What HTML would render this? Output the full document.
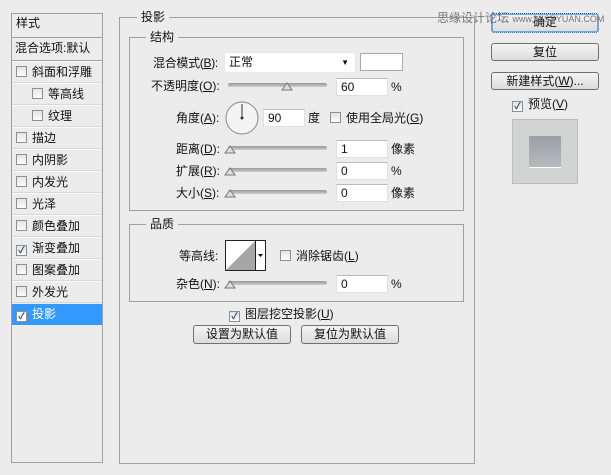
<!DOCTYPE html>
<html><head><meta charset="utf-8"><style>
*{margin:0;padding:0;box-sizing:border-box}
body{width:611px;height:475px;background:#ececec;font-family:"Liberation Sans","Noto Sans CJK SC",sans-serif;font-size:12px;color:#111;position:relative;overflow:hidden}
.a{position:absolute;white-space:nowrap;line-height:14px}
.box{position:absolute;border:1px solid #a0a0a0}
.lg{position:absolute;background:#ececec;padding:0 4px;line-height:14px}
.row{position:absolute;left:12px;width:90px;height:22px;border-top:1px solid #fafafa;border-bottom:1px solid #d8d8d8;line-height:20px;padding-left:4px}
.cb{display:inline-block;width:11px;height:11px;border:1px solid #8e8f8f;background:linear-gradient(#e4e4e4,#fdfdfd);vertical-align:-1px;margin-right:5px;position:relative;font-size:9px;line-height:9px;color:#1f3f8f;text-align:center;font-weight:bold}
.inp{position:absolute;background:#fff;border:1px solid #e0e0e0;border-top-color:#bbb;height:18px;line-height:16px;padding-left:4px}
.sl{position:absolute;height:4px;border-radius:2px;background:linear-gradient(#999,#ccc);}
.btn{position:absolute;border:1px solid #707070;border-radius:3px;background:linear-gradient(#f4f4f4,#dcdcdc);text-align:center;line-height:16px;font-size:12px}
</style></head><body>
<div class="box" style="left:11px;top:13px;width:92px;height:450px;background:#ececec"></div>
<div class="a" style="left:16px;top:16px">样式</div>
<div style="position:absolute;left:12px;top:37px;width:90px;height:1px;background:#a0a0a0"></div>
<div class="a" style="left:15px;top:41px">混合选项:默认</div>
<div style="position:absolute;left:12px;top:60px;width:90px;height:1px;background:#a0a0a0"></div>
<div class="row" style="top:61px"><span class="cb"></span>斜面和浮雕</div>
<div class="row" style="top:83px;padding-left:20px"><span class="cb"></span>等高线</div>
<div class="row" style="top:105px;padding-left:20px"><span class="cb"></span>纹理</div>
<div class="row" style="top:127px"><span class="cb"></span>描边</div>
<div class="row" style="top:149px"><span class="cb"></span>内阴影</div>
<div class="row" style="top:171px"><span class="cb"></span>内发光</div>
<div class="row" style="top:193px"><span class="cb"></span>光泽</div>
<div class="row" style="top:215px"><span class="cb"></span>颜色叠加</div>
<div class="row" style="top:237px"><span class="cb">✓</span>渐变叠加</div>
<div class="row" style="top:259px"><span class="cb"></span>图案叠加</div>
<div class="row" style="top:281px"><span class="cb"></span>外发光</div>
<div class="row" style="top:304px;background:#3399ff;color:#fff;border:none;height:21px"><span class="cb" style="background:#fff">✓</span>投影</div>

<div class="box" style="left:119px;top:17px;width:356px;height:447px"></div>
<div class="lg" style="left:137px;top:10px">投影</div>
<div class="box" style="left:129px;top:37px;width:335px;height:174px"></div>
<div class="lg" style="left:146px;top:30px">结构</div>

<div class="a" style="left:153px;top:56px;letter-spacing:-0.3px">混合模式(<u>B</u>):</div>
<div class="inp" style="left:224px;top:52px;width:132px;height:21px;line-height:19px;border-color:#e8e8e8">正常<span style="position:absolute;right:6px;top:0;font-size:8px">▼</span></div>
<div class="inp" style="left:360px;top:53px;width:43px;height:18px;border-color:#aaa"></div>

<div class="a" style="left:151px;top:79px">不透明度(<u>O</u>):</div>
<div class="sl" style="left:228px;top:83px;width:99px"></div>
<svg class="a" style="left:281px;top:82px" width="12" height="9"><path d="M1 8 L6 1 L11 8 Z" fill="#ddd" stroke="#777"/></svg>
<div class="inp" style="left:336px;top:78px;width:52px">60</div>
<div class="a" style="left:391px;top:80px">%</div>

<div class="a" style="left:176px;top:111px">角度(<u>A</u>):</div>
<svg class="a" style="left:225px;top:101px" width="35" height="35"><circle cx="17" cy="17" r="16" fill="#f4f4f4" stroke="#888"/><line x1="17" y1="3" x2="17" y2="17" stroke="#333"/><circle cx="17" cy="17" r="1.5" fill="#333"/></svg>
<div class="inp" style="left:263px;top:109px;width:42px">90</div>
<div class="a" style="left:308px;top:111px">度</div>
<div class="a" style="left:330px;top:111px"><span class="cb"></span>使用全局光(<u>G</u>)</div>

<div class="a" style="left:176px;top:142px">距离(<u>D</u>):</div>
<div class="sl" style="left:228px;top:146px;width:99px"></div>
<svg class="a" style="left:224px;top:145px" width="12" height="9"><path d="M1 8 L6 1 L11 8 Z" fill="#ddd" stroke="#777"/></svg>
<div class="inp" style="left:336px;top:140px;width:52px">1</div>
<div class="a" style="left:391px;top:142px">像素</div>

<div class="a" style="left:176px;top:164px">扩展(<u>R</u>):</div>
<div class="sl" style="left:228px;top:168px;width:99px"></div>
<svg class="a" style="left:224px;top:167px" width="12" height="9"><path d="M1 8 L6 1 L11 8 Z" fill="#ddd" stroke="#777"/></svg>
<div class="inp" style="left:336px;top:162px;width:52px">0</div>
<div class="a" style="left:391px;top:164px">%</div>

<div class="a" style="left:176px;top:186px">大小(<u>S</u>):</div>
<div class="sl" style="left:228px;top:190px;width:99px"></div>
<svg class="a" style="left:224px;top:189px" width="12" height="9"><path d="M1 8 L6 1 L11 8 Z" fill="#ddd" stroke="#777"/></svg>
<div class="inp" style="left:336px;top:184px;width:52px">0</div>
<div class="a" style="left:391px;top:186px">像素</div>

<div class="box" style="left:129px;top:224px;width:335px;height:78px"></div>
<div class="lg" style="left:146px;top:217px">品质</div>
<div class="a" style="left:179px;top:249px">等高线:</div>
<svg class="a" style="left:225px;top:240px" width="41" height="31"><rect x="0.5" y="0.5" width="40" height="30" fill="#fff" stroke="#222"/><path d="M1 30 L30 1 L30 30 Z" fill="#a6a6a6"/><line x1="30.5" y1="1" x2="30.5" y2="30" stroke="#222"/><path d="M33 14 L38 14 L35.5 17 Z" fill="#000"/></svg>
<div class="a" style="left:280px;top:249px"><span class="cb"></span>消除锯齿(<u>L</u>)</div>
<div class="a" style="left:176px;top:277px">杂色(<u>N</u>):</div>
<div class="sl" style="left:228px;top:281px;width:99px"></div>
<svg class="a" style="left:224px;top:280px" width="12" height="9"><path d="M1 8 L6 1 L11 8 Z" fill="#ddd" stroke="#777"/></svg>
<div class="inp" style="left:336px;top:275px;width:52px">0</div>
<div class="a" style="left:391px;top:277px">%</div>

<div class="a" style="left:229px;top:307px"><span class="cb">✓</span>图层挖空投影(<u>U</u>)</div>
<div class="btn" style="left:193px;top:325px;width:98px;height:19px">设置为默认值</div>
<div class="btn" style="left:301px;top:325px;width:98px;height:19px">复位为默认值</div>

<div class="btn" style="left:491px;top:13px;width:108px;height:20px;border:1px dotted #1b5aa8;box-shadow:inset 0 0 0 1px #6aa8e0">确定</div>
<div class="btn" style="left:491px;top:43px;width:108px;height:18px">复位</div>
<div class="btn" style="left:491px;top:72px;width:108px;height:18px">新建样式(<u>W</u>)...</div>
<div class="a" style="left:512px;top:97px"><span class="cb">✓</span>预览(<u>V</u>)</div>
<div style="position:absolute;left:512px;top:119px;width:66px;height:65px;background:#d2d3d3;border:1px solid #bbb"></div>
<div style="position:absolute;left:529px;top:136px;width:32px;height:32px;background:linear-gradient(#9aa0a5,#b6babd);border-bottom:1px solid #fff"></div>
<div class="a" style="left:437px;top:11px;font-size:12px;color:#777">思缘设计论坛 <span style="font-size:9px">www.MISSYUAN.COM</span></div>
</body></html>
